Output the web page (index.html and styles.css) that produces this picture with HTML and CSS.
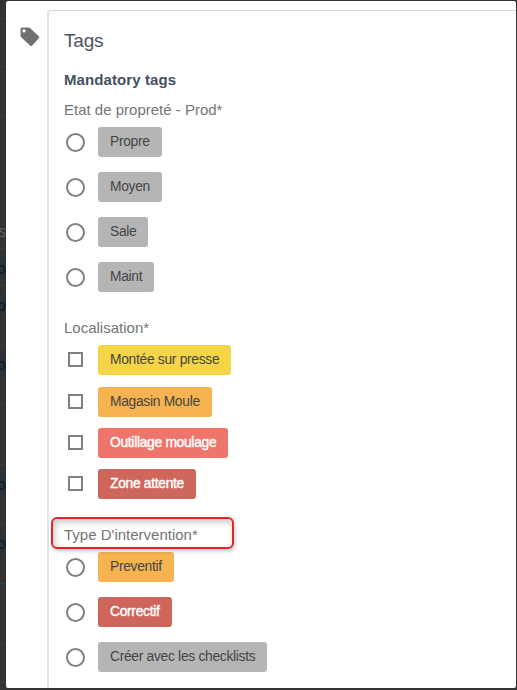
FILE: index.html
```
<!DOCTYPE html>
<html lang="fr">
<head>
<meta charset="UTF-8" />
<meta name="viewport" content="width=device-width, initial-scale=1" />
<title>Tags</title>
<link rel="stylesheet" href="styles.css">
</head>
<body>

<!-- Page behind the dialog -->
<div class="page" aria-hidden="true">
  <div class="page-row head-1"></div>
  <div class="page-row head-2"></div>
  <div class="page-row head-3"></div>
  <div class="page-row head-4"><span class="letter">s</span></div>
  <div class="page-row short"><span class="link">o</span></div>
  <div class="page-row"><span class="link">o</span></div>
  <div class="page-row"><span class="link">o</span></div>
  <div class="page-row"></div>
  <div class="page-row"><span class="link">o</span></div>
  <div class="page-row blue"><span class="link">o</span></div>
  <div class="page-row blue"></div>
  <div class="page-row last"></div>
</div>

<div class="dialog">
  <svg class="tag-icon" viewBox="0 0 20 20" aria-hidden="true">
    <path fill-rule="evenodd" d="M2.2 0.5H8.6Q9.5 0.5 10.2 1.2L18.8 9.3Q19.8 10.3 18.8 11.3L12.2 18.4Q11.1 19.5 10 18.4L1.2 10.3Q0.5 9.6 0.5 8.7V2.2Q0.5 0.5 2.2 0.5ZM4 2.3A1.6 1.6 0 1 0 4 5.5A1.6 1.6 0 1 0 4 2.3Z" />
  </svg>

  <div class="card">
    <h2>Tags</h2>
    <h3>Mandatory tags</h3>

    <div class="group">
      <div class="label">Etat de propreté - Prod*</div>
      <label class="option"><input type="radio" name="etat"><span class="chip gray">Propre</span></label>
      <label class="option"><input type="radio" name="etat"><span class="chip gray">Moyen</span></label>
      <label class="option"><input type="radio" name="etat"><span class="chip gray">Sale</span></label>
      <label class="option"><input type="radio" name="etat"><span class="chip gray">Maint</span></label>
    </div>

    <div class="group checks">
      <div class="label">Localisation*</div>
      <label class="option"><input type="checkbox"><span class="chip yellow">Montée sur presse</span></label>
      <label class="option"><input type="checkbox"><span class="chip orange">Magasin Moule</span></label>
      <label class="option"><input type="checkbox"><span class="chip coral">Outillage moulage</span></label>
      <label class="option"><input type="checkbox"><span class="chip red">Zone attente</span></label>
    </div>

    <div class="group type">
      <div class="label marked">Type D'intervention*</div>
      <label class="option"><input type="radio" name="type"><span class="chip orange">Preventif</span></label>
      <label class="option"><input type="radio" name="type"><span class="chip red">Correctif</span></label>
      <label class="option"><input type="radio" name="type"><span class="chip gray">Créer avec les checklists</span></label>
    </div>
  </div>
</div>

</body>
</html>
```
FILE: styles.css
```
* {
  box-sizing: border-box;
}
body {
  margin: 0;
  height: 690px;
  overflow: hidden;
  position: relative;
  background: #333;
  font-family: "Liberation Sans", Arial, sans-serif;
}

/* page behind the dialog */
.page {
  width: 6px;
}
.page-row {
  height: 59.7px;
  padding-top: 7px;
  border-bottom: 1px solid #3b3b3b;
}
.head-1 { height: 19px; }
.head-2 { height: 48px; }
.head-3 { height: 49px; }
.head-4 { height: 133px; padding-top: 103px; }
.short { height: 37px; }
.last { height: 38px; }
.blue { border-bottom-color: #1d4563; }
.link,
.letter {
  display: flex;
  justify-content: flex-end;
  align-items: center;
  width: 6px;
  height: 23px;
  font: 16px "Open Sans", sans-serif;
  color: #11171c;
}
.link {
  background: #2c3238;
}
.letter {
  color: #606060;
}

/* dialog */
.dialog {
  position: absolute;
  top: 1px;
  left: 6px;
  width: 510px;
  height: 687px;
  overflow: hidden;
  border-radius: 2px;
  background: #fff;
  display: flex;
  align-items: flex-start;
}
.tag-icon {
  flex: none;
  width: 20px;
  height: 20px;
  margin: 25.5px 7.5px 0 13.5px;
  fill: #707070;
}
.card {
  flex: none;
  width: 480px;
  height: 700px;
  margin-top: 9px;
  padding: 18px 15px 0;
  border: 1px solid #d5d6d8;
  border-left: 2px solid #e2e3e4;
  border-radius: 4px;
}
h2 {
  margin: 0;
  font-size: 19px;
  font-weight: normal;
  letter-spacing: -0.2px;
  line-height: 24px;
  color: #4b5464;
}
h3 {
  margin: 17px 0 0;
  font-size: 15px;
  letter-spacing: 0.1px;
  line-height: 20px;
  color: #435061;
}
.label {
  position: relative;
  height: 20px;
  font-size: 15px;
  line-height: 20px;
  color: #757575;
}
.group {
  display: flex;
  flex-direction: column;
  align-items: flex-start;
  gap: 15px;
  margin-top: 10px;
}
.group .label {
  margin-bottom: -8px;
}
.option {
  display: flex;
  align-items: center;
  height: 30px;
}
.checks {
  gap: 11.3px;
  margin-top: 26px;
}
.checks .label {
  margin-bottom: -4px;
}
.type {
  margin-top: 26px;
}
input {
  appearance: none;
  flex: none;
  margin: 0;
  background: #fff;
  border: 2px solid #808080;
}
input[type="radio"] {
  width: 19px;
  height: 19px;
  margin: 0 13px 0 2px;
  border-radius: 50%;
}
input[type="checkbox"] {
  width: 15px;
  height: 15px;
  margin: 0 15px 1px 4px;
}
.chip {
  height: 30px;
  padding: 0 12px;
  border-radius: 3px;
  font-size: 13.8px;
  letter-spacing: -0.29px;
  line-height: 29px;
  white-space: nowrap;
  color: #444;
}
.gray { background: #b5b5b5; }
.yellow { background: #f4d548; }
.orange { background: #f6b34f; }
.coral { background: #ee756b; }
.red { background: #cf665c; }
.coral,
.red {
  color: #fff;
  -webkit-text-stroke: 0.4px #fff;
}

/* highlight around the label */
.marked::after {
  content: "";
  position: absolute;
  top: -8px;
  left: -13px;
  width: 179px;
  height: 28px;
  border: 2px solid #e3242b;
  border-radius: 6px;
  box-shadow: 1px 2px 4px rgba(0, 0, 0, 0.22), inset 2px 3px 7px rgba(0, 0, 0, 0.22);
}
```
